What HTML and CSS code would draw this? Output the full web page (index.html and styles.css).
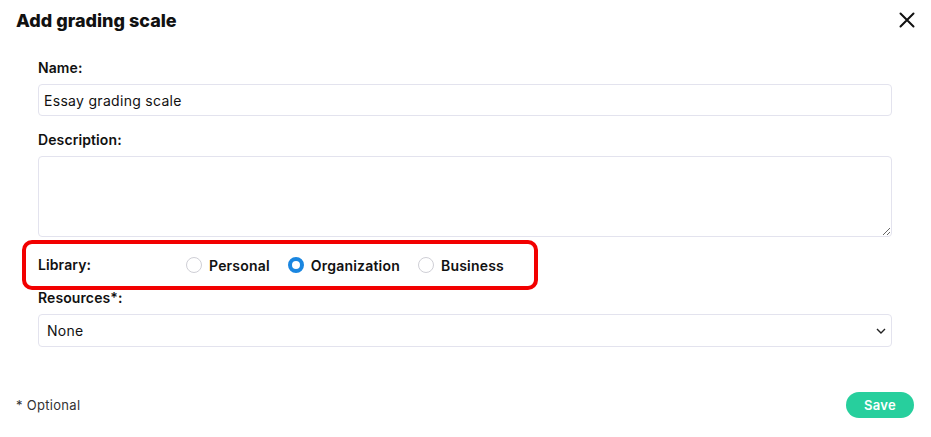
FILE: index.html
```html
<!DOCTYPE html>
<html lang="en">
<head>
<meta charset="utf-8">
<title>Add grading scale</title>
<link rel="stylesheet" href="styles.css">
</head>
<body>
<div class="modal">
  <header class="modal-header">
    <h1 class="modal-title">Add grading scale</h1>
    <button class="close-btn" aria-label="Close">
      <svg width="16" height="16" viewBox="0 0 16 16"><path d="M1.5 1.5 L14.5 14.5 M14.5 1.5 L1.5 14.5" stroke="#111" stroke-width="2" fill="none" stroke-linecap="round"/></svg>
    </button>
  </header>
  <form class="form">
    <div class="field">
      <label class="label">Name:</label>
      <input class="input" type="text" value="Essay grading scale">
    </div>
    <div class="field">
      <label class="label">Description:</label>
      <textarea class="textarea"></textarea>
    </div>
    <div class="library-row">
      <span class="label lib-label">Library:</span>
      <div class="radios">
        <label class="radio"><span class="dot"></span>Personal</label>
        <label class="radio"><span class="dot checked"></span>Organization</label>
        <label class="radio"><span class="dot"></span>Business</label>
      </div>
    </div>
    <div class="field resources">
      <label class="label">Resources*:</label>
      <div class="select">
        <span>None</span>
        <svg width="10" height="6" viewBox="0 0 10 6"><path d="M1 1 L5 5 L9 1" stroke="#222" stroke-width="1.4" fill="none"/></svg>
      </div>
    </div>
  </form>
  <footer class="modal-footer">
    <span class="optional">* Optional</span>
    <button class="save-btn">Save</button>
  </footer>
</div>
</body>
</html>
```
FILE: styles.css
```css
* { box-sizing: border-box; }
html, body { margin: 0; padding: 0; background: #fff; }
body {
  font-family: "Inter", "Noto Sans", sans-serif;
  color: #111;
  width: 931px;
  height: 437px;
  overflow: hidden;
}
.modal { display: flex; flex-direction: column; }
.modal-header {
  display: flex;
  justify-content: space-between;
  align-items: center;
  padding: 0 16px;
  height: 40px;
}
.modal-title {
  margin: 0;
  font-size: 18px;
  font-weight: 800;
  letter-spacing: 0;
  color: #111;
}
.close-btn {
  border: 0;
  background: none;
  padding: 0;
  width: 16px;
  height: 16px;
  display: flex;
}
.form {
  padding: 19px 39px 0 38px;
  display: flex;
  flex-direction: column;
}
.field { display: flex; flex-direction: column; }
.label {
  font-size: 14px;
  font-weight: 600;
  letter-spacing: 0.1px;
  color: #111;
  line-height: 18px;
}
.field .label { margin-bottom: 7px; }
.input {
  height: 32px;
  border: 1px solid #e3e3ee;
  border-radius: 4px;
  padding: 0 5px;
  font: inherit;
  font-size: 14px;
  letter-spacing: 0.3px;
  color: #111;
  margin-bottom: 15px;
}
.textarea {
  height: 81px;
  border: 1px solid #e3e3ee;
  border-radius: 4px;
  resize: vertical;
  font: inherit;
}
.library-row {
  margin: 3px 0 0 -16px;
  width: 516px;
  height: 50px;
  border: 4px solid #f20000;
  border-radius: 10px;
  display: flex;
  align-items: center;
  padding-left: 12px;
}
.lib-label { width: 148px; }
.radios { display: flex; align-items: center; gap: 18px; }
.radio {
  display: flex;
  align-items: center;
  gap: 7px;
  font-size: 14px;
  font-weight: 600;
  letter-spacing: 0.2px;
}
.dot {
  width: 16px;
  height: 16px;
  border-radius: 50%;
  border: 1px solid #cfcfd6;
  background: #fff;
}
.dot.checked {
  border: 4.5px solid #1a86e0;
  background: #fff;
}
.resources { margin-top: -1px; }
.resources .label { margin-bottom: 7px; }
.select {
  height: 33px;
  border: 1px solid #e3e3ee;
  border-radius: 4px;
  display: flex;
  align-items: center;
  justify-content: space-between;
  padding: 0 5px 0 8px;
  font-size: 14px;
  letter-spacing: 0.3px;
}
.modal-footer {
  display: flex;
  justify-content: space-between;
  align-items: center;
  padding: 45px 17px 0 16px;
}
.optional { font-size: 13px; letter-spacing: 0.3px; color: #333; }
.save-btn {
  border: 0;
  background: #27cf9d;
  color: #fff;
  font: inherit;
  font-size: 13px;
  font-weight: 600;
  letter-spacing: 0.3px;
  width: 68px;
  height: 26px;
  border-radius: 13px;
}
```
